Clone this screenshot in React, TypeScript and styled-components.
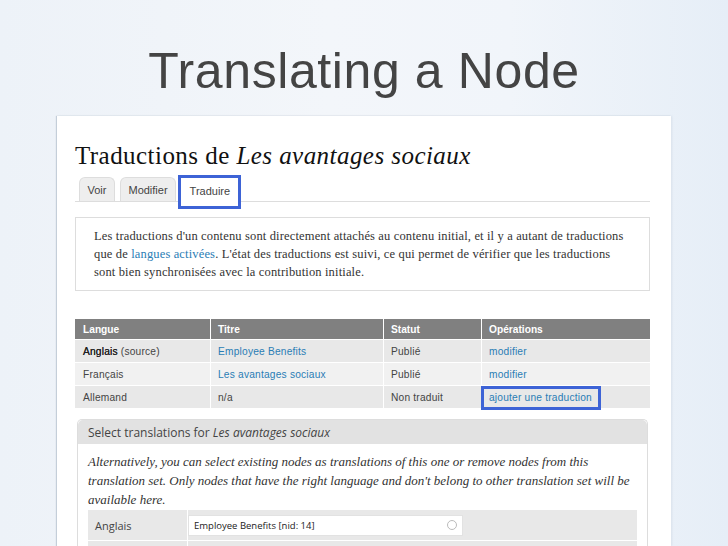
import React from "react";
import styled, { createGlobalStyle } from "styled-components";

const Global = createGlobalStyle`
  html, body { margin: 0; padding: 0; }
  body {
    width: 728px;
    height: 546px;
    overflow: hidden;
    background: linear-gradient(90deg, #edf2f8 0%, #f3f6fa 45%, #f1f5fa 70%, #e6eef7 100%);
    font-family: "Liberation Sans", Arial, sans-serif;
  }
`;

const Slide = styled.div`
  width: 728px;
  height: 546px;
  display: flex;
  flex-direction: column;
`;

const SlideTitle = styled.h1`
  margin: 0;
  height: 116px;
  box-sizing: border-box;
  padding-top: 42px;
  text-align: center;
  font-family: "Liberation Sans", Arial, sans-serif;
  font-weight: normal;
  font-size: 50px;
  line-height: 58px;
  color: #444;
  letter-spacing: 0.6px;
`;

const Panel = styled.div`
  margin-left: 57px;
  width: 614px;
  flex: 1;
  background: #fff;
  box-sizing: border-box;
  padding: 0 21px 0 18px;
  box-shadow: -1px 0 1px rgba(120, 140, 160, 0.35), 1px 0 2px rgba(120, 140, 160, 0.15);
  overflow: hidden;
`;

const PageHeading = styled.h2`
  margin: 0;
  padding-top: 25px;
  font-family: "Liberation Serif", Georgia, serif;
  font-weight: normal;
  font-size: 25px;
  line-height: 30px;
  color: #111;
  letter-spacing: 0.45px;
  em { font-style: italic; }
`;

const Tabs = styled.div`
  margin-top: 6px;
  display: flex;
  gap: 5px;
  padding-left: 4px;
  border-bottom: 1px solid #ddd;
  height: 24px;
  align-items: flex-end;
`;

const Tab = styled.div<{ $active?: boolean }>`
  position: relative;
  height: 24px;
  box-sizing: border-box;
  padding: 1px 7.5px 0 7.5px;
  display: flex;
  align-items: center;
  font-size: 11px;
  color: #444;
  background: ${(p) => (p.$active ? "#fff" : "#eee")};
  border: 1px solid ${(p) => (p.$active ? "#fff" : "#ddd")};
  border-bottom: none;
  border-radius: 6px 6px 0 0;
  margin-bottom: ${(p) => (p.$active ? "-1px" : "0")};
  ${(p) =>
    p.$active &&
    `
    &::after {
      content: "";
      position: absolute;
      left: -4px;
      right: -3px;
      top: -4px;
      bottom: -7px;
      border: 3px solid #3d63d6;
      pointer-events: none;
    }
  `}
`;

const Description = styled.div`
  margin-top: 15px;
  border: 1px solid #ddd;
  padding: 9px 18px;
  font-family: "Liberation Serif", Georgia, serif;
  font-size: 12.5px;
  letter-spacing: 0.15px;
  line-height: 18px;
  color: #333;
`;

const Link = styled.a`
  color: #2a7db5;
  text-decoration: none;
`;

const Table = styled.table`
  margin-top: 28px;
  width: 100%;
  table-layout: fixed;
  border-collapse: collapse;
  font-family: "Liberation Sans", Arial, sans-serif;
  font-size: 10.2px;
  color: #444;
`;

const Th = styled.th<{ $w: number }>`
  width: ${(p) => p.$w - 15}px;
  text-align: left;
  font-weight: bold;
  color: #fff;
  background: #808080;
  height: 20px;
  padding: 0 7px;
  border-left: 1px solid #fff;
  &:first-child { border-left: none; padding-left: 8px; }
`;

const Tr = styled.tr<{ $odd: boolean }>`
  background: ${(p) => (p.$odd ? "#e8e8e8" : "#f1f1f1")};
  border-top: 1px solid #fff;
`;

const Td = styled.td`
  height: 22px;
  padding: 0 7px;
  border-left: 1px solid #fff;
  letter-spacing: 0.2px;
  white-space: nowrap;
  &:first-child { border-left: none; padding-left: 8px; }
  b { font-weight: normal; color: #222; text-shadow: 0 0 0.4px #222; }
`;

const Highlight = styled.span`
  position: relative;
  &::after {
    content: "";
    position: absolute;
    left: -8px;
    right: -9px;
    top: -6px;
    bottom: -7px;
    border: 3px solid #3d63d6;
    pointer-events: none;
  }
`;

const Fieldset = styled.div`
  margin: 11px 2px 0 2px;
  border: 1px solid #ddd;
  border-bottom: none;
  border-radius: 5px 5px 0 0;
`;

const Legend = styled.div`
  background: #e2e2e2;
  height: 24px;
  display: flex;
  align-items: center;
  padding-left: 10px;
  border-radius: 5px 5px 0 0;
  font-family: "Open Sans", sans-serif;
  font-size: 12px;
  color: #444;
  em { font-style: italic; }
`;

const FieldBody = styled.div`
  padding: 8px 10px 0 10px;
`;

const Help = styled.p`
  margin: 0;
  font-family: "Liberation Serif", Georgia, serif;
  font-style: italic;
  font-size: 13px;
  line-height: 19px;
  color: #333;
`;

const FormRows = styled.div`
  margin-top: 1px;
  display: flex;
  flex-direction: column;
  gap: 1px;
`;

const FormRow = styled.div`
  display: grid;
  grid-template-columns: 100px 1fr;
  align-items: center;
  height: 30px;
  background: #e8e8e8;
`;

const FieldLabel = styled.div`
  font-family: "Open Sans", sans-serif;
  font-size: 11px;
  color: #444;
  padding-left: 7px;
  height: 100%;
  display: flex;
  align-items: center;
  border-right: 1px solid #fff;
`;

const Input = styled.div`
  width: 275px;
  height: 21px;
  box-sizing: border-box;
  background: #fff;
  border: 1px solid #e2e2e2;
  display: flex;
  align-items: center;
  justify-content: space-between;
  padding: 0 5px 0 5px;
  font-family: "Open Sans", sans-serif;
  font-size: 9.5px;
  color: #222;
`;

const Spinner = styled.span`
  width: 8px;
  height: 8px;
  border: 1px solid #bbb;
  border-radius: 50%;
`;

const rows = [
  { lang: <><b>Anglais</b> (source)</>, title: <Link>Employee Benefits</Link>, status: "Publié", op: <Link>modifier</Link> },
  { lang: "Français", title: <Link>Les avantages sociaux</Link>, status: "Publié", op: <Link>modifier</Link> },
  { lang: "Allemand", title: "n/a", status: "Non traduit", op: <Highlight><Link>ajouter une traduction</Link></Highlight> },
];

export default function App() {
  return (
    <>
      <Global />
      <Slide>
        <SlideTitle>Translating a Node</SlideTitle>
        <Panel>
          <PageHeading>
            Traductions de <em>Les avantages sociaux</em>
          </PageHeading>
          <Tabs>
            <Tab>Voir</Tab>
            <Tab>Modifier</Tab>
            <Tab $active>Traduire</Tab>
          </Tabs>
          <Description>
            Les traductions d'un contenu sont directement attachés au contenu initial, et il y a autant de traductions
            que de <Link>langues activées</Link>. L'état des traductions est suivi, ce qui permet de vérifier que les
            traductions sont bien synchronisées avec la contribution initiale.
          </Description>
          <Table>
            <thead>
              <tr>
                <Th $w={135}>Langue</Th>
                <Th $w={173}>Titre</Th>
                <Th $w={98}>Statut</Th>
                <Th $w={169}>Opérations</Th>
              </tr>
            </thead>
            <tbody>
              {rows.map((r, i) => (
                <Tr key={i} $odd={i % 2 === 0}>
                  <Td>{r.lang}</Td>
                  <Td>{r.title}</Td>
                  <Td>{r.status}</Td>
                  <Td>{r.op}</Td>
                </Tr>
              ))}
            </tbody>
          </Table>
          <Fieldset>
            <Legend>
              Select translations for&nbsp;<em>Les avantages sociaux</em>
            </Legend>
            <FieldBody>
              <Help>
                Alternatively, you can select existing nodes as translations of this one or remove nodes from this
                translation set. Only nodes that have the right language and don't belong to other translation set will
                be available here.
              </Help>
              <FormRows>
                <FormRow>
                  <FieldLabel>Anglais</FieldLabel>
                  <Input>
                    Employee Benefits [nid: 14]
                    <Spinner />
                  </Input>
                </FormRow>
                <FormRow>
                  <FieldLabel>Allemand</FieldLabel>
                  <Input />
                </FormRow>
              </FormRows>
            </FieldBody>
          </Fieldset>
        </Panel>
      </Slide>
    </>
  );
}
